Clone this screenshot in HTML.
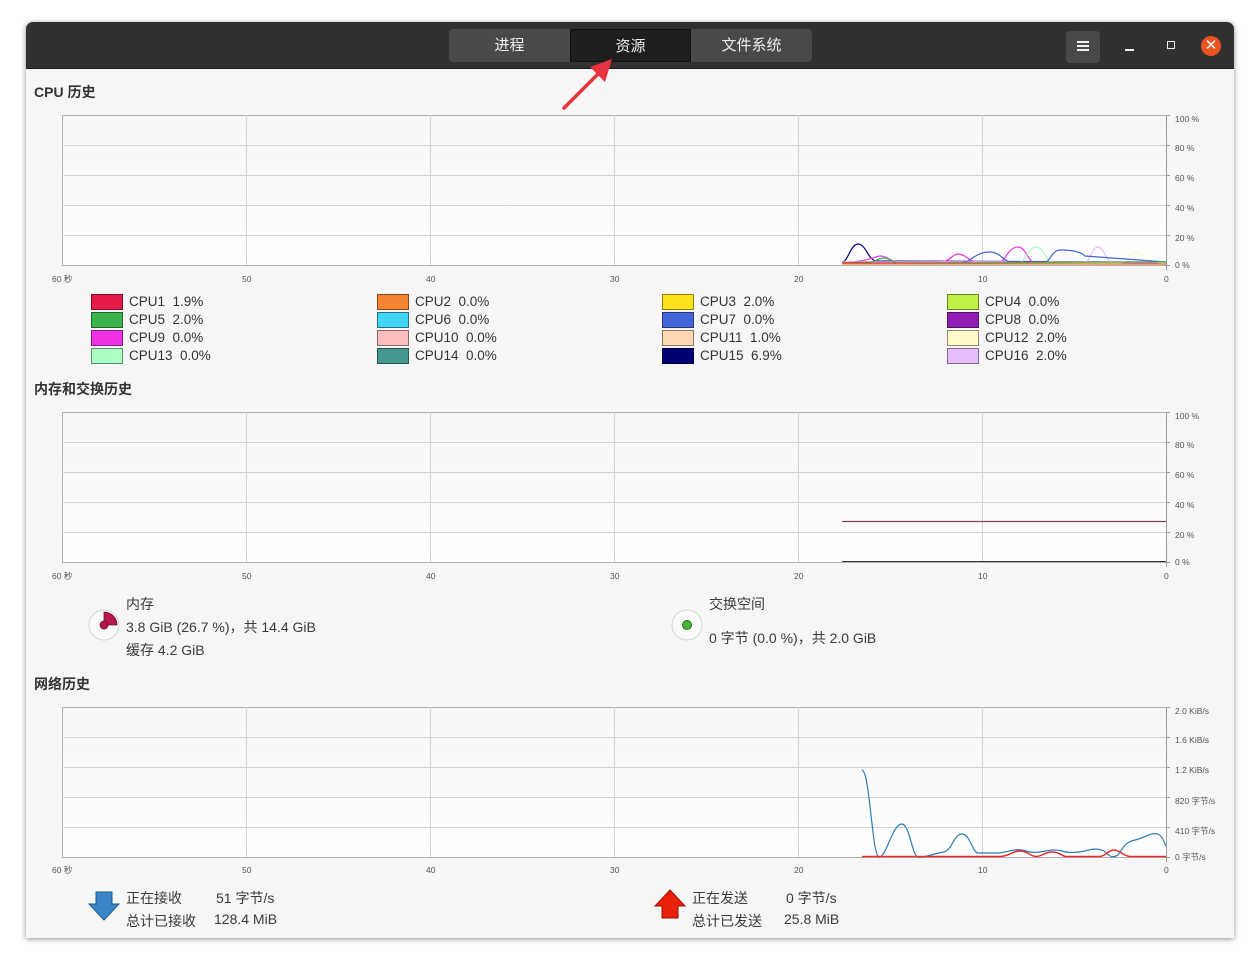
<!DOCTYPE html>
<html><head><meta charset="utf-8"><style>
*{margin:0;padding:0;box-sizing:border-box}
body{width:1260px;height:968px;background:#fff;position:relative;overflow:hidden;font-family:"Liberation Sans","Noto Sans CJK SC",sans-serif;color:#3c3c3c}
.win{position:absolute;left:26px;top:22px;width:1208px;height:916px;background:#f6f6f6;border-radius:7px 7px 0 0;box-shadow:0 1px 6px rgba(0,0,0,.45);overflow:hidden}
.hdr{position:absolute;left:0;top:0;width:1208px;height:47px;background:#323030;border-bottom:1px solid #1c1c1c}
.tab{position:absolute;top:7px;height:33px;width:121px;background:#4a4848;color:#eee;font-size:15px;text-align:center;line-height:33px}
.a{position:absolute;white-space:nowrap}
.h{font-size:14px;font-weight:bold;color:#333}
.ax{font-size:8.5px;color:#555}
.lg{font-size:13.5px;color:#333}
.sw{position:absolute;width:32px;height:16px;border:1px solid rgba(0,0,0,.45)}
.t{font-size:14px;color:#3a3a3a}
</style></head><body>
<div class="win">
<div class="hdr">
<div class="tab" style="left:423px;border-radius:4px 0 0 4px">进程</div>
<div class="tab" style="left:544px;background:#1e1e1e;border:1px solid #111">资源</div>
<div class="tab" style="left:665px;border-radius:0 4px 4px 0">文件系统</div>
<div style="position:absolute;left:1040px;top:9px;width:34px;height:32px;background:#4a4848;border-radius:4px"></div>
<div style="position:absolute;left:1051px;top:19px;width:12px;height:1.5px;background:#eee;box-shadow:0 4px 0 #eee,0 8px 0 #eee"></div>
<div style="position:absolute;left:1099px;top:27px;width:9px;height:1.5px;background:#eee"></div>
<div style="position:absolute;left:1141px;top:19px;width:8px;height:8px;border:1.5px solid #eee"></div>
<div style="position:absolute;left:1175px;top:14px;width:20px;height:20px;border-radius:50%;background:#e95420;color:#fff;font-size:15px;line-height:19px;text-align:center">✕</div>
</div>
</div>

<div class="a h" style="left:34px;top:82px">CPU 历史</div>
<div class="a h" style="left:34px;top:379px">内存和交换历史</div>
<div class="a h" style="left:34px;top:674px">网络历史</div>

<svg style="position:absolute;left:0;top:0" width="1260" height="968">
<defs><linearGradient id="g" x1="0" y1="0" x2="0" y2="1"><stop offset="0" stop-color="#f6f6f6"/><stop offset="1" stop-color="#fff"/></linearGradient></defs>
<g id="grid" stroke="#d2d2d2" stroke-width="1" fill="none">
<rect x="62.5" y="115.5" width="1104" height="150" fill="url(#g)" stroke="#b0b0b0"/>
<path d="M246.5 115v150M430.5 115v150M614.5 115v150M798.5 115v150M982.5 115v150M62 145.5h1104M62 175.5h1104M62 205.5h1104M62 235.5h1104"/>
<path d="M1166.5 115v155M1166 115.5h4M1166 145.5h4M1166 175.5h4M1166 205.5h4M1166 235.5h4M1166 265.5h4" stroke="#999"/>
</g>
<use href="#grid" y="297"/>
<use href="#grid" y="592"/>
<!-- cpu lines -->
<g fill="none" stroke-width="1.2">
<path d="M842 262 C848 262 850 245 858 244 C866 244 868 260 876 261 L1166 262" stroke="#000080"/>
<path d="M842 263 L940 262 C950 262 952 254 958 254 C966 254 968 262 980 262 L1166 263" stroke="#f032e6"/>
<path d="M842 262 C870 262 875 256 880 256 C888 256 890 262 900 262 L1000 262 C1005 262 1008 247 1018 247 C1026 247 1028 262 1034 262 L1166 262" stroke="#f032e6"/>
<path d="M842 262 L1020 262 C1026 262 1028 247 1036 247 C1044 247 1046 262 1052 262 L1166 262" stroke="#aaffc3"/>
<path d="M842 262 L1085 262 C1090 262 1092 247 1098 247 C1104 247 1106 262 1112 262 L1166 262" stroke="#e6beff"/>
<path d="M842 263 L1120 263 C1126 263 1128 253 1136 253 C1144 253 1146 263 1166 263" stroke="#fffac8"/>
<path d="M842 263 L960 263 C970 263 975 252 990 252 C1000 252 1005 262 1010 262 L1045 262 C1050 262 1052 250 1060 250 C1070 250 1080 251 1085 256 L1166 262" stroke="#4363d8"/>
<path d="M842 263 L870 262 C876 262 878 258 884 258 C890 258 892 263 900 263 L1166 262" stroke="#3cb44b"/>
<path d="M842 263 L1100 264 L1166 264" stroke="#e6194b"/>
<path d="M842 264 L1166 264" stroke="#f58231"/>
</g>
<!-- memory -->
<path d="M842 521.5H1166" stroke="#8b3a60" stroke-width="1.2"/>
<path d="M842 561.5H1166" stroke="#333" stroke-width="1"/>
<!-- network -->
<path d="M862 770 C870 772 872 856 879 857 C886 858 893 823 902 824 C910 825 912 856 918 857 C925 858 935 853 944 852 C952 850 954 834 962 834 C970 834 972 852 978 853 L1000 853 C1010 851 1015 849 1022 850 C1030 852 1032 853 1040 852 C1050 850 1055 849 1062 851 C1068 853 1075 853 1085 851 C1092 849 1098 848 1104 851 C1108 855 1112 859 1118 855 C1124 846 1126 842 1135 840 C1145 838 1150 832 1158 834 C1163 836 1165 845 1166 846" fill="none" stroke="#2a7ab8" stroke-width="1.2"/>
<path d="M862 856.5 L1000 856.5 C1010 856 1012 851 1020 851 C1028 851 1030 856.5 1036 856.5 C1042 856.5 1045 852 1052 852 C1060 852 1062 856.5 1066 856.5 L1100 856.5 C1106 856 1108 850 1114 850 C1120 850 1124 856.5 1130 856.5 L1166 856.5" fill="none" stroke="#ef2929" stroke-width="1.5"/>
<!-- arrow -->
<path d="M564 108 L604 68" stroke="#e8323f" stroke-width="3.5" stroke-linecap="round"/>
<path d="M612 59 L590 67 L605 82 Z" fill="#e8323f"/>
<!-- mem pie -->
<circle cx="104" cy="625" r="15" fill="#fafafa" stroke="#d5d5d5"/>
<path d="M104 625 L104 612 A13 13 0 0 1 117 625 Z" fill="#b5174e" stroke="#6a0d2e" stroke-width=".8"/>
<circle cx="104" cy="625" r="4" fill="#b5174e" stroke="#6a0d2e" stroke-width=".8"/>
<circle cx="687" cy="625" r="15" fill="#fafafa" stroke="#d5d5d5"/>
<circle cx="687" cy="625" r="4.5" fill="#4cae3c" stroke="#2a6a22"/>
<!-- net arrows -->
<path d="M96 892h16v12h7l-15 16l-15-16h7z" fill="#3a86c8" stroke="#1f5a8e"/>
<path d="M670 890l15 16h-7v12h-16v-12h-7z" fill="#e8200c" stroke="#a01000"/>
</svg>

<div class="a ax" style="left:52px;top:273px">60 秒</div><div class="a ax" style="left:242px;top:274px">50</div><div class="a ax" style="left:426px;top:274px">40</div><div class="a ax" style="left:610px;top:274px">30</div><div class="a ax" style="left:794px;top:274px">20</div><div class="a ax" style="left:978px;top:274px">10</div><div class="a ax" style="left:1164px;top:274px">0</div>
<div class="a ax" style="left:1175px;top:114px">100 %</div><div class="a ax" style="left:1175px;top:143px">80 %</div><div class="a ax" style="left:1175px;top:173px">60 %</div><div class="a ax" style="left:1175px;top:203px">40 %</div><div class="a ax" style="left:1175px;top:233px">20 %</div><div class="a ax" style="left:1175px;top:260px">0 %</div>

<div class="a ax" style="left:52px;top:570px">60 秒</div><div class="a ax" style="left:242px;top:571px">50</div><div class="a ax" style="left:426px;top:571px">40</div><div class="a ax" style="left:610px;top:571px">30</div><div class="a ax" style="left:794px;top:571px">20</div><div class="a ax" style="left:978px;top:571px">10</div><div class="a ax" style="left:1164px;top:571px">0</div>
<div class="a ax" style="left:1175px;top:411px">100 %</div><div class="a ax" style="left:1175px;top:440px">80 %</div><div class="a ax" style="left:1175px;top:470px">60 %</div><div class="a ax" style="left:1175px;top:500px">40 %</div><div class="a ax" style="left:1175px;top:530px">20 %</div><div class="a ax" style="left:1175px;top:557px">0 %</div>

<div class="a ax" style="left:52px;top:864px">60 秒</div><div class="a ax" style="left:242px;top:865px">50</div><div class="a ax" style="left:426px;top:865px">40</div><div class="a ax" style="left:610px;top:865px">30</div><div class="a ax" style="left:794px;top:865px">20</div><div class="a ax" style="left:978px;top:865px">10</div><div class="a ax" style="left:1164px;top:865px">0</div>
<div class="a ax" style="left:1175px;top:706px">2.0 KiB/s</div><div class="a ax" style="left:1175px;top:735px">1.6 KiB/s</div><div class="a ax" style="left:1175px;top:765px">1.2 KiB/s</div><div class="a ax" style="left:1175px;top:795px">820 字节/s</div><div class="a ax" style="left:1175px;top:825px">410 字节/s</div><div class="a ax" style="left:1175px;top:851px">0 字节/s</div>

<!-- legend -->
<div class="sw" style="left:91px;top:294px;background:#e6194b"></div><div class="a lg" style="left:129px;top:294px">CPU1&nbsp; 1.9%</div>
<div class="sw" style="left:91px;top:312px;background:#3cb44b"></div><div class="a lg" style="left:129px;top:312px">CPU5&nbsp; 2.0%</div>
<div class="sw" style="left:91px;top:330px;background:#f032e6"></div><div class="a lg" style="left:129px;top:330px">CPU9&nbsp; 0.0%</div>
<div class="sw" style="left:91px;top:348px;background:#aaffc3"></div><div class="a lg" style="left:129px;top:348px">CPU13&nbsp; 0.0%</div>
<div class="sw" style="left:377px;top:294px;background:#f58231"></div><div class="a lg" style="left:415px;top:294px">CPU2&nbsp; 0.0%</div>
<div class="sw" style="left:377px;top:312px;background:#42d4f4"></div><div class="a lg" style="left:415px;top:312px">CPU6&nbsp; 0.0%</div>
<div class="sw" style="left:377px;top:330px;background:#fabebe"></div><div class="a lg" style="left:415px;top:330px">CPU10&nbsp; 0.0%</div>
<div class="sw" style="left:377px;top:348px;background:#469990"></div><div class="a lg" style="left:415px;top:348px">CPU14&nbsp; 0.0%</div>
<div class="sw" style="left:662px;top:294px;background:#ffe119"></div><div class="a lg" style="left:700px;top:294px">CPU3&nbsp; 2.0%</div>
<div class="sw" style="left:662px;top:312px;background:#4363d8"></div><div class="a lg" style="left:700px;top:312px">CPU7&nbsp; 0.0%</div>
<div class="sw" style="left:662px;top:330px;background:#ffd8b1"></div><div class="a lg" style="left:700px;top:330px">CPU11&nbsp; 1.0%</div>
<div class="sw" style="left:662px;top:348px;background:#000075"></div><div class="a lg" style="left:700px;top:348px">CPU15&nbsp; 6.9%</div>
<div class="sw" style="left:947px;top:294px;background:#bfef45"></div><div class="a lg" style="left:985px;top:294px">CPU4&nbsp; 0.0%</div>
<div class="sw" style="left:947px;top:312px;background:#911eb4"></div><div class="a lg" style="left:985px;top:312px">CPU8&nbsp; 0.0%</div>
<div class="sw" style="left:947px;top:330px;background:#fffac8"></div><div class="a lg" style="left:985px;top:330px">CPU12&nbsp; 2.0%</div>
<div class="sw" style="left:947px;top:348px;background:#e6beff"></div><div class="a lg" style="left:985px;top:348px">CPU16&nbsp; 2.0%</div>

<div class="a t" style="left:126px;top:594px">内存</div>
<div class="a t" style="left:126px;top:617px">3.8 GiB (26.7 %)，共 14.4 GiB</div>
<div class="a t" style="left:126px;top:640px">缓存 4.2 GiB</div>
<div class="a t" style="left:709px;top:594px">交换空间</div>
<div class="a t" style="left:709px;top:628px">0 字节 (0.0 %)，共 2.0 GiB</div>

<div class="a t" style="left:126px;top:888px">正在接收</div><div class="a t" style="left:216px;top:888px">51 字节/s</div>
<div class="a t" style="left:126px;top:911px">总计已接收</div><div class="a t" style="left:214px;top:911px">128.4 MiB</div>
<div class="a t" style="left:692px;top:888px">正在发送</div><div class="a t" style="left:786px;top:888px">0 字节/s</div>
<div class="a t" style="left:692px;top:911px">总计已发送</div><div class="a t" style="left:784px;top:911px">25.8 MiB</div>
</body></html>
